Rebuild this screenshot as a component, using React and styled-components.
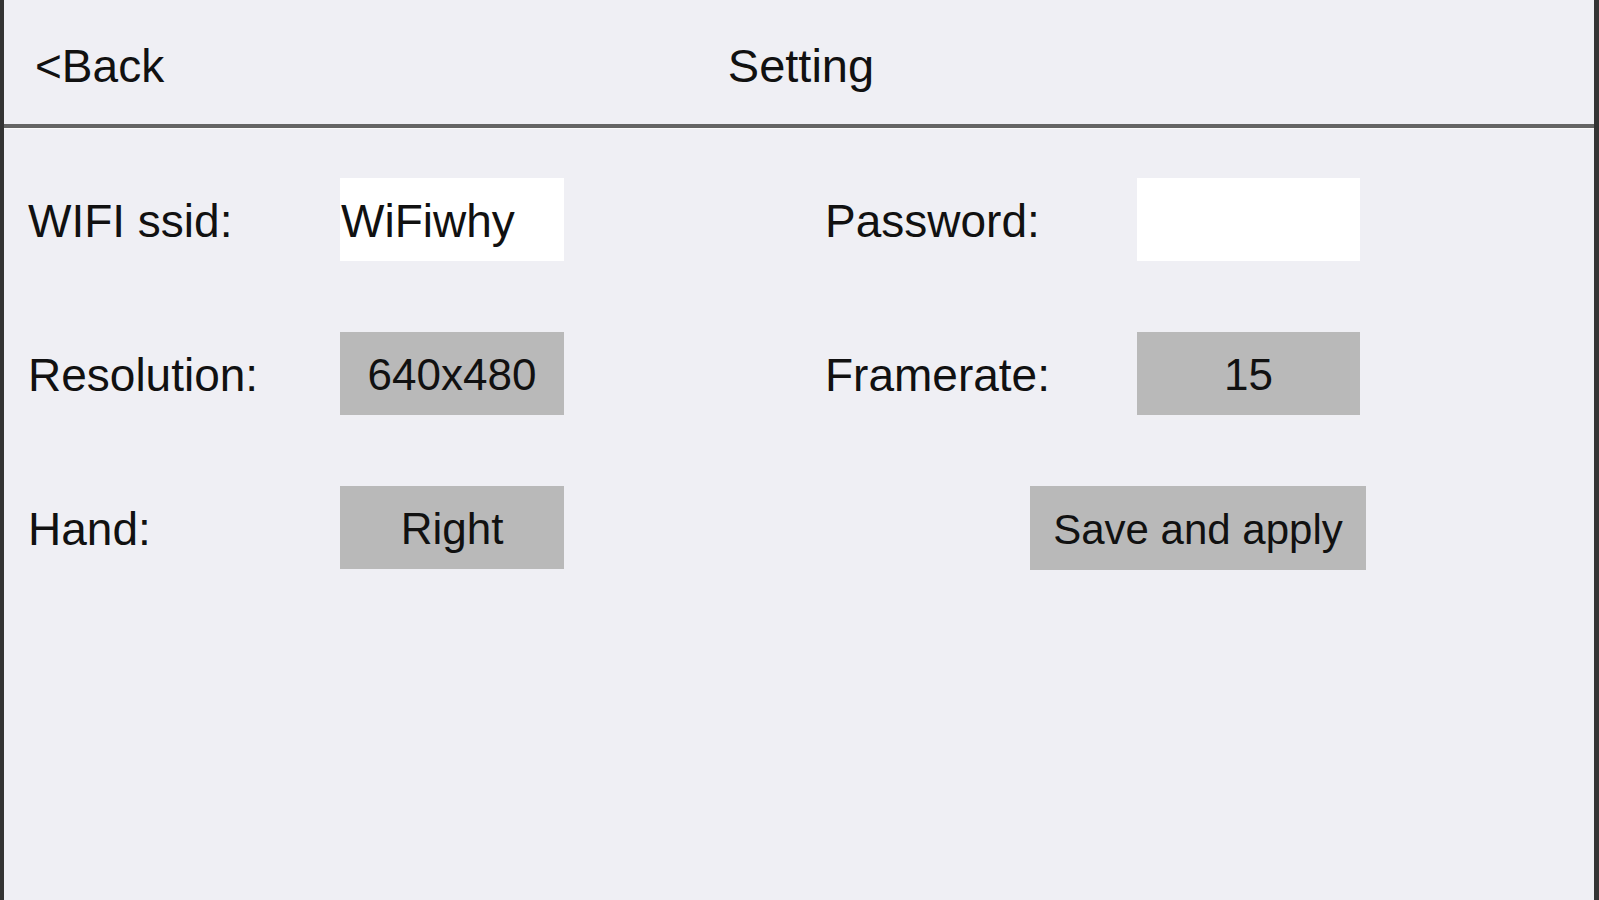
import React from 'react';
import styled, { createGlobalStyle } from 'styled-components';

const GlobalStyle = createGlobalStyle`
  html, body {
    margin: 0;
    padding: 0;
    background: #efeff4;
    overflow: hidden;
  }
  * {
    box-sizing: border-box;
  }
`;

const Frame = styled.div`
  height: 100vh;
  background: #efeff4;
  border-left: 4px solid #333;
  border-right: 5px solid #333;
  font-family: "Liberation Sans", Arial, sans-serif;
  color: #111;
`;

const Header = styled.header`
  position: relative;
  height: 128px;
  display: flex;
  align-items: center;
  justify-content: center;
  padding-top: 6px;
  border-bottom: 4px solid #646464;
  box-shadow: 0 1px 0 #fafafa;
`;

const BackLink = styled.span`
  position: absolute;
  left: 31px;
  top: 8px;
  height: 124px;
  display: flex;
  align-items: center;
  font-size: 46px;
  padding-bottom: 8px;
`;

const Title = styled.h1`
  margin: 0;
  font-size: 47px;
  font-weight: normal;
  transform: translateX(2px);
`;

const Form = styled.div`
  display: grid;
  grid-template-columns: 312px 224px 261px 312px 223px;
  grid-auto-rows: 83px;
  row-gap: 71px;
  padding: 50px 0 0 24px;
`;

const Label = styled.div`
  display: flex;
  align-items: center;
  padding-top: 3px;
  font-size: 46px;
  white-space: nowrap;
`;

const Field = styled.div`
  display: flex;
  align-items: center;
  justify-content: ${(p) => (p.$input ? 'flex-start' : 'center')};
  padding-left: ${(p) => (p.$input ? '1px' : '0')};
  padding-top: 3px;
  background: ${(p) => (p.$input ? '#ffffff' : '#b9b9b9')};
  font-size: ${(p) => (p.$input ? '46px' : '44px')};
  white-space: nowrap;
`;

const SaveButton = styled.div`
  grid-column: 4 / 6;
  margin-left: 205px;
  width: 336px;
  height: 84px;
  display: flex;
  align-items: center;
  justify-content: center;
  padding-top: 3px;
  background: #b9b9b9;
  font-size: 42px;
  white-space: nowrap;
`;

export default function App() {
  return (
    <>
      <GlobalStyle />
      <Frame>
        <Header>
          <BackLink>&lt;Back</BackLink>
          <Title>Setting</Title>
        </Header>
        <Form>
          <Label>WIFI ssid:</Label>
          <Field $input>WiFiwhy</Field>
          <span />
          <Label>Password:</Label>
          <Field $input />

          <Label>Resolution:</Label>
          <Field>640x480</Field>
          <span />
          <Label>Framerate:</Label>
          <Field>15</Field>

          <Label>Hand:</Label>
          <Field>Right</Field>
          <span />
          <SaveButton>Save and apply</SaveButton>
        </Form>
      </Frame>
    </>
  );
}
